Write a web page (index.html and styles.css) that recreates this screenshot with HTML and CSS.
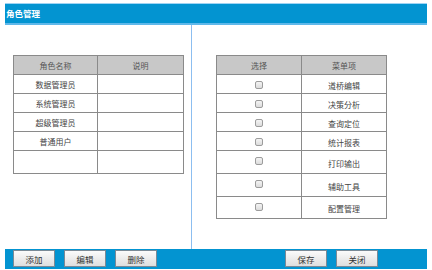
FILE: index.html
```html
<!DOCTYPE html>
<html lang="zh-CN">

<head>
    <meta charset="utf-8">
    <meta name="viewport" content="width=device-width, initial-scale=1.0">
    <title>角色管理</title>
    <link rel="stylesheet" href="styles.css">
</head>

<body>
    <div class="window">
        <!-- Title bar -->
        <div class="title-bar">角色管理</div>

        <div class="panes">
            <!-- Roles -->
            <div class="pane pane-left">
                <table class="grid">
                    <tr class="head">
                        <th>角色名称</th>
                        <th>说明</th>
                    </tr>
                    <tr><td>数据管理员</td><td></td></tr>
                    <tr><td>系统管理员</td><td></td></tr>
                    <tr><td>超级管理员</td><td></td></tr>
                    <tr><td>普通用户</td><td></td></tr>
                    <tr class="tall"><td></td><td></td></tr>
                </table>
            </div>

            <!-- Menu items -->
            <div class="pane pane-right">
                <table class="grid grid-menu">
                    <tr class="head">
                        <th>选择</th>
                        <th>菜单项</th>
                    </tr>
                    <tr><td><span class="check"></span></td><td>道桥编辑</td></tr>
                    <tr><td><span class="check"></span></td><td>决策分析</td></tr>
                    <tr><td><span class="check"></span></td><td>查询定位</td></tr>
                    <tr><td><span class="check"></span></td><td>统计报表</td></tr>
                    <tr class="tall"><td><span class="check"></span></td><td>打印输出</td></tr>
                    <tr class="tall"><td><span class="check"></span></td><td>辅助工具</td></tr>
                    <tr class="mid"><td><span class="check"></span></td><td>配置管理</td></tr>
                </table>
            </div>
        </div>

        <!-- Button bar -->
        <div class="button-bar">
            <div class="buttons buttons-left">
                <button>添加</button>
                <button>编辑</button>
                <button>删除</button>
            </div>
            <div class="buttons buttons-right">
                <button>保存</button>
                <button>关闭</button>
            </div>
        </div>
    </div>
</body>

</html>
```

FILE: styles.css
```css
* {
    box-sizing: border-box;
}

body {
    margin: 0;
    background: #fff;
    font-family: "Noto Sans CJK SC", "Noto Sans", sans-serif;
    font-size: 8px;
    color: #444;
}

.window {
    margin: 3px 5px 0 5px;
    width: 422px;
}

/* Title bar */
.title-bar {
    height: 22px;
    line-height: 19px;
    padding-left: 1px;
    background: #0394d1;
    border-top: 1px solid #9fd4f4;
    border-bottom: 2px solid #5fb8ea;
    color: #fff;
    font-weight: bold;
    font-size: 8.5px;
}

/* Two panes */
.panes {
    display: flex;
    height: 224px;
}

.pane {
    padding-top: 30px;
}

.pane-left {
    width: 187px;
    padding-left: 8px;
    border-right: 1px solid #8cbef0;
}

.pane-right {
    flex: 1;
    padding-left: 24px;
}

/* Tables */
.grid {
    width: 171px;
    border-collapse: collapse;
    table-layout: fixed;
    border: 1px solid #8a8a8a;
}

.grid th,
.grid td {
    height: 19px;
    padding: 0;
    text-align: center;
    font-weight: normal;
    border: 1px solid #8a8a8a;
    border-top-color: #b4b4b4;
}

.grid td + td,
.grid th + th {
    border-left-color: #9a9a9a;
}

.grid .head th {
    background: #c8c8c8;
    color: #555;
    border-top-color: #8a8a8a;
}

.grid .tall td {
    height: 23px;
}

.grid .mid td {
    height: 22px;
}

.grid th:first-child,
.grid td:first-child {
    width: 84px;
}

.grid-menu th:first-child,
.grid-menu td:first-child {
    width: 85px;
}

.grid-menu td:first-child {
    vertical-align: top;
    padding-top: 5px;
}

.grid-menu td + td {
    padding-top: 2px;
}

.check {
    display: inline-block;
    width: 8px;
    height: 8px;
    border: 1px solid #9c9c9c;
    border-radius: 2px;
    background: linear-gradient(#f4f4f4, #dcdcdc);
}

/* Button bar */
.button-bar {
    display: flex;
    height: 20px;
    background: #0394d1;
    padding-top: 1px;
}

.buttons {
    display: flex;
    gap: 9px;
}

.buttons-left {
    width: 187px;
    padding-left: 8px;
}

.buttons-right {
    padding-left: 93px;
}

.buttons button {
    width: 42px;
    height: 17px;
    padding: 0;
    font-family: "Noto Sans CJK SC", "Noto Sans", sans-serif;
    font-size: 8.5px;
    color: #333;
    border: 1px solid #7a8a96;
    background: linear-gradient(#fbfbfb, #dedede);
}
```
